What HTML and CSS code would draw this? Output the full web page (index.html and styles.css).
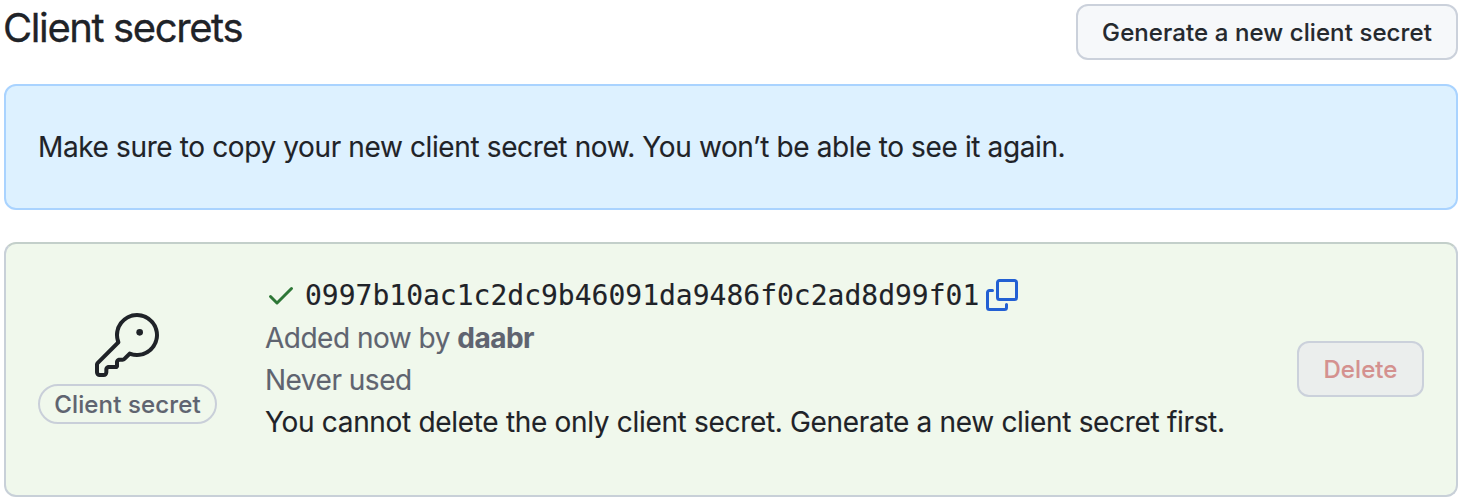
FILE: index.html
```html
<!DOCTYPE html>
<html lang="en">
<head>
<meta charset="utf-8">
<title>Client secrets</title>
<link rel="stylesheet" href="styles.css">
</head>
<body>
<main class="page">
  <header class="heading">
    <h2 class="title"><span>Client secrets</span></h2>
    <button class="btn generate"><span>Generate a new client secret</span></button>
  </header>
  <div class="flash"><span class="flash-text">Make sure to copy your new client secret now. You won’t be able to see it again.</span></div>
  <section class="secret">
    <div class="kind">
      <svg class="key" viewBox="0 0 24 24"><path d="M16.75 8.5a1.25 1.25 0 1 0 0-2.5 1.25 1.25 0 0 0 0 2.5Z"/><path d="M15.75 0a8.25 8.25 0 1 1-2.541 16.101l-1.636 1.636a1.744 1.744 0 0 1-1.237.513H9.25a.25.25 0 0 0-.25.25v1.448a.876.876 0 0 1-.256.619l-.214.213a.75.75 0 0 1-.545.22H5.25a.25.25 0 0 0-.25.25v1A1.75 1.75 0 0 1 3.25 24h-1.5A1.75 1.75 0 0 1 0 22.25v-2.836c0-.464.185-.908.513-1.236l7.386-7.388A8.249 8.249 0 0 1 15.75 0ZM9 8.25a6.733 6.733 0 0 0 .463 2.462.75.75 0 0 1-.168.804l-7.722 7.721a.25.25 0 0 0-.073.177v2.836c0 .138.112.25.25.25h1.5a.25.25 0 0 0 .25-.25v-1c0-.966.784-1.75 1.75-1.75H7.5v-1c0-.966.784-1.75 1.75-1.75h1.086a.25.25 0 0 0 .177-.073l1.971-1.972a.75.75 0 0 1 .804-.168A6.75 6.75 0 1 0 9 8.25Z"/></svg>
      <span class="label"><span class="label-text">Client secret</span></span>
    </div>
    <div class="details">
      <div class="token">
        <svg class="check" viewBox="0 0 16 16"><path d="M13.78 4.22a.75.75 0 0 1 0 1.06l-7.25 7.25a.75.75 0 0 1-1.06 0L2.22 9.28a.751.751 0 0 1 .018-1.042.751.751 0 0 1 1.042-.018L6 10.94l6.72-6.72a.75.75 0 0 1 1.06 0Z"/></svg>
        <code>0997b10ac1c2dc9b46091da9486f0c2ad8d99f01</code>
        <svg class="copy" viewBox="0 0 16 16"><path d="M0 6.75C0 5.784.784 5 1.75 5h1.5a.75.75 0 0 1 0 1.5h-1.5a.25.25 0 0 0-.25.25v7.5c0 .138.112.25.25.25h7.5a.25.25 0 0 0 .25-.25v-1.5a.75.75 0 0 1 1.5 0v1.5A1.75 1.75 0 0 1 9.25 16h-7.5A1.75 1.75 0 0 1 0 14.25Z"/><path d="M5 1.75C5 .784 5.784 0 6.75 0h7.5C15.216 0 16 .784 16 1.75v7.5A1.75 1.75 0 0 1 14.25 11h-7.5A1.75 1.75 0 0 1 5 9.25Zm1.75-.25a.25.25 0 0 0-.25.25v7.5c0 .138.112.25.25.25h7.5a.25.25 0 0 0 .25-.25v-7.5a.25.25 0 0 0-.25-.25Z"/></svg>
      </div>
      <p class="muted"><span class="added">Added now by <b>daabr</b></span></p>
      <p class="muted"><span class="never">Never used</span></p>
      <p><span class="notice">You cannot delete the only client secret. Generate a new client secret first.</span></p>
    </div>
    <button class="btn delete" disabled><span>Delete</span></button>
  </section>
</main>
</body>
</html>
```
FILE: styles.css
```css
* { box-sizing: border-box; }
body { margin: 0; background: #fff; color: #1f2328; font-family: Inter, "Liberation Sans", sans-serif; font-size: 28px; -webkit-text-stroke: 0.12px; }
.page { padding: 4px 4px 0; }
.heading { display: flex; justify-content: space-between; height: 56px; }
.title { margin: 0 0 0 -1px; font-size: 40px; font-weight: 400; line-height: 47px; letter-spacing: -1.4px; -webkit-text-stroke: 0.3px; }
.btn { border: 2px solid #cbd1db; border-radius: 12px; background: #f6f8fa; font: 500 24px Inter, sans-serif; height: 56px; color: #25292e; padding: 0; white-space: nowrap; }
.generate { width: 382px; letter-spacing: 0.09px; }
.flash { margin-top: 24px; height: 126px; border: 2px solid #a9d3ff; border-radius: 12px; background: #ddf1ff; padding: 0 32px; display: flex; align-items: center; white-space: nowrap; }
.flash-text { letter-spacing: -0.38px; }
.secret { margin-top: 32px; height: 255px; border: 2px solid #c8d0d8; border-top-color: #c3cfca; border-radius: 12px; background: #f0f8ec; display: flex; align-items: center; padding: 0 32px; }
.kind { width: 179px; display: flex; flex-direction: column; align-items: center; gap: 7px; padding-bottom: 2px; }
.key { width: 64px; height: 64px; fill: #1f2328; margin-right: 2px; }
.label { width: 179px; height: 40px; border: 2px solid #c9cfd9; border-radius: 20px; display: flex; align-items: center; justify-content: center; font-size: 24px; font-weight: 500; color: #5f6470; letter-spacing: 0.13px; white-space: nowrap; }
.details { width: 990px; margin-left: 48px; flex: none; padding-bottom: 22px; white-space: nowrap; }
.details p { margin: 0; line-height: 42px; }
.details .muted { color: #5f6470; letter-spacing: -0.5px; }
.notice { letter-spacing: -0.32px; }
.token { display: flex; align-items: center; height: 42px; }
.check { width: 32px; height: 32px; fill: #2d7736; margin-right: 8px; margin-bottom: 2px; }
code { font: 28px "DejaVu Sans Mono", monospace; }
.copy { width: 32px; height: 32px; margin-left: 7px; margin-bottom: 2px; fill: #2360d3; }
.delete { width: 127px; margin-left: auto; margin-bottom: 2px; padding-top: 2px; letter-spacing: 0.09px; background: #ebeeed; color: #d4918f; }
```
